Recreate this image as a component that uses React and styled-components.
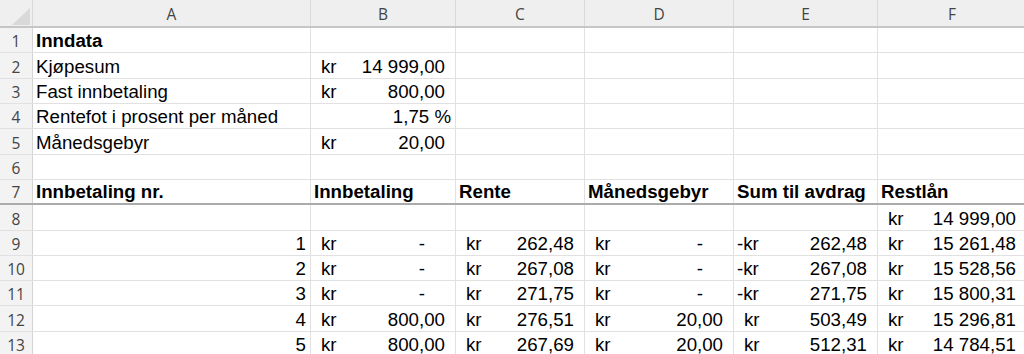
import React from 'react';
import styled, { createGlobalStyle } from 'styled-components';

const GlobalStyle = createGlobalStyle`
  html, body {
    margin: 0;
    padding: 0;
    background: #ffffff;
    overflow: hidden;
  }
`;

const COLUMNS = '33px 278px 145px 129px 149px 144px 149px';
const GRID = '#e1e1e1';

const Sheet = styled.div`
  display: flex;
  flex-direction: column;
  width: 1024px;
  overflow: hidden;
  font-family: 'Liberation Sans', Arial, sans-serif;
  font-size: 18.7px;
  color: #000;
`;

const HeaderRow = styled.div`
  display: grid;
  grid-template-columns: ${COLUMNS};
  height: 28px;
  box-sizing: border-box;
  background: #efefef;
  border-bottom: 2px solid #c6c6c6;
`;

const Corner = styled.div`
  position: relative;
  border-right: 1px solid #d9d9d9;
  svg {
    position: absolute;
    left: 0;
    top: 0;
  }
`;

const ColHead = styled.div`
  display: flex;
  align-items: flex-end;
  justify-content: center;
  padding-bottom: 3px;
  box-sizing: border-box;
  border-right: 1px solid #d9d9d9;
  font-family: 'Open Sans', 'Noto Sans', sans-serif;
  font-size: 15.5px;
  line-height: 18px;
  color: #444;
`;

const Row = styled.div`
  display: grid;
  grid-template-columns: ${COLUMNS};
  height: ${p => p.$h}px;
  box-sizing: border-box;
  border-bottom: ${p => (p.$rule ? '2px solid #ababab' : `1px solid ${GRID}`)};
`;

const RowHead = styled.div`
  display: flex;
  align-items: flex-end;
  justify-content: center;
  padding-bottom: 1px;
  box-sizing: border-box;
  background: #f3f3f3;
  border-right: 1px solid #d4d4d4;
  font-family: 'Open Sans', 'Noto Sans', sans-serif;
  font-size: 15.5px;
  line-height: 20px;
  color: #444;
`;

const Cell = styled.div`
  display: flex;
  align-items: flex-end;
  justify-content: ${p => (p.$right ? 'flex-end' : 'flex-start')};
  padding: 0 ${p => (p.$right ? 4 : 3)}px 1px 3px;
  box-sizing: border-box;
  border-right: 1px solid ${GRID};
  font-weight: ${p => (p.$bold ? 700 : 400)};
  line-height: 20px;
  white-space: nowrap;
`;

const MoneyCell = styled(Cell)`
  justify-content: space-between;
  padding: 0 3px 1px 3px;
`;

const Currency = styled.span`
  padding-left: ${p => (p.$neg ? 0 : 7)}px;
`;

const Amount = styled.span`
  padding-right: ${p => (p.$dash ? 27 : 7)}px;
`;

const Money = ({ value, neg }) => (
  <MoneyCell>
    <Currency $neg={neg}>{neg ? '-kr' : 'kr'}</Currency>
    <Amount $dash={value == null}>{value ?? '-'}</Amount>
  </MoneyCell>
);

const HEIGHTS = [25, 26, 25, 25, 26, 25, 25, 26, 25, 25, 25, 26, 25];

const payments = [
  { n: 1, paid: null, rente: '262,48', gebyr: null, sum: '262,48', neg: true, rest: '15 261,48' },
  { n: 2, paid: null, rente: '267,08', gebyr: null, sum: '267,08', neg: true, rest: '15 528,56' },
  { n: 3, paid: null, rente: '271,75', gebyr: null, sum: '271,75', neg: true, rest: '15 800,31' },
  { n: 4, paid: '800,00', rente: '276,51', gebyr: '20,00', sum: '503,49', neg: false, rest: '15 296,81' },
  { n: 5, paid: '800,00', rente: '267,69', gebyr: '20,00', sum: '512,31', neg: false, rest: '14 784,51' },
];

const Empty = ({ count }) =>
  Array.from({ length: count }, (_, i) => <Cell key={i} />);

export default function App() {
  return (
    <>
      <GlobalStyle />
      <Sheet>
        <HeaderRow>
          <Corner>
            <svg width="32" height="26" viewBox="0 0 32 26">
              <polygon points="12,25 30,25 30,8" fill="#d9d9d9" />
            </svg>
          </Corner>
          {['A', 'B', 'C', 'D', 'E', 'F'].map(c => (
            <ColHead key={c}>{c}</ColHead>
          ))}
        </HeaderRow>

        <Row $h={HEIGHTS[0]}>
          <RowHead>1</RowHead>
          <Cell $bold>Inndata</Cell>
          <Empty count={5} />
        </Row>
        <Row $h={HEIGHTS[1]}>
          <RowHead>2</RowHead>
          <Cell>Kjøpesum</Cell>
          <Money value="14 999,00" />
          <Empty count={4} />
        </Row>
        <Row $h={HEIGHTS[2]}>
          <RowHead>3</RowHead>
          <Cell>Fast innbetaling</Cell>
          <Money value="800,00" />
          <Empty count={4} />
        </Row>
        <Row $h={HEIGHTS[3]}>
          <RowHead>4</RowHead>
          <Cell>Rentefot i prosent per måned</Cell>
          <Cell $right>1,75 %</Cell>
          <Empty count={4} />
        </Row>
        <Row $h={HEIGHTS[4]}>
          <RowHead>5</RowHead>
          <Cell>Månedsgebyr</Cell>
          <Money value="20,00" />
          <Empty count={4} />
        </Row>
        <Row $h={HEIGHTS[5]}>
          <RowHead>6</RowHead>
          <Empty count={6} />
        </Row>
        <Row $h={HEIGHTS[6]} $rule>
          <RowHead>7</RowHead>
          <Cell $bold>Innbetaling nr.</Cell>
          <Cell $bold>Innbetaling</Cell>
          <Cell $bold>Rente</Cell>
          <Cell $bold>Månedsgebyr</Cell>
          <Cell $bold>Sum til avdrag</Cell>
          <Cell $bold>Restlån</Cell>
        </Row>
        <Row $h={HEIGHTS[7]}>
          <RowHead>8</RowHead>
          <Empty count={5} />
          <Money value="14 999,00" />
        </Row>
        {payments.map((p, i) => (
          <Row key={p.n} $h={HEIGHTS[8 + i]}>
            <RowHead>{9 + i}</RowHead>
            <Cell $right>{p.n}</Cell>
            <Money value={p.paid} />
            <Money value={p.rente} />
            <Money value={p.gebyr} />
            <Money value={p.sum} neg={p.neg} />
            <Money value={p.rest} />
          </Row>
        ))}
      </Sheet>
    </>
  );
}
